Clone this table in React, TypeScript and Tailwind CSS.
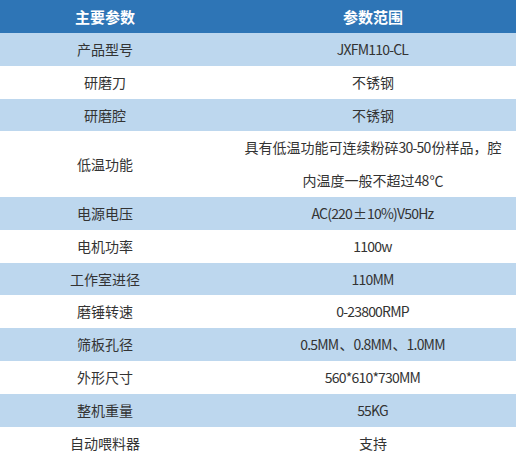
const rows: [string, string[]][] = [
  ["产品型号", ["JXFM110-CL"]],
  ["研磨刀", ["不锈钢"]],
  ["研磨腔", ["不锈钢"]],
  ["低温功能", ["具有低温功能可连续粉碎30-50份样品，腔", "内温度一般不超过48℃"]],
  ["电源电压", ["AC(220±10%)V50Hz"]],
  ["电机功率", ["1100w"]],
  ["工作室进径", ["110MM"]],
  ["磨锤转速", ["0-23800RMP"]],
  ["筛板孔径", ["0.5MM、0.8MM、1.0MM"]],
  ["外形尺寸", ["560*610*730MM"]],
  ["整机重量", ["55KG"]],
  ["自动喂料器", ["支持"]],
];

// latin runs are set a little tighter, like the narrow half-width glyphs in the screenshot
function Line({ text }: { text: string }) {
  const parts = text.split(/([\x20-\x7e]+)/).filter(Boolean);
  return (
    <div className="whitespace-nowrap">
      {parts.map((p, i) =>
        /^[\x20-\x7e]+$/.test(p) ? (
          <span key={i} className="tracking-[-0.8px] pr-[1px]">
            {p}
          </span>
        ) : (
          <span key={i}>{p}</span>
        )
      )}
    </div>
  );
}

export default function App() {
  return (
    <div className="w-[518px] h-[460px] overflow-hidden bg-white font-['Noto_Sans_CJK_SC',sans-serif]">
      <div className="w-[516px]">
        <div className="grid grid-cols-[210px_1fr] bg-[#2e75b6] text-white text-[15px] font-bold leading-[33px] text-center">
          <div>主要参数</div>
          <div className="pl-[30px] pr-[10px]">参数范围</div>
        </div>
        {rows.map(([k, lines], i) => (
          <div
            key={k}
            className={`grid grid-cols-[210px_1fr] items-center text-[14px] text-[#333333] leading-[32.8px] text-center ${
              i % 2 === 0 ? "bg-[#bdd7ee]" : "bg-white"
            }`}
          >
            <div>{k}</div>
            <div className="pl-[30px] pr-[10px]">
              {lines.map((l) => (
                <Line key={l} text={l} />
              ))}
            </div>
          </div>
        ))}
      </div>
    </div>
  );
}
